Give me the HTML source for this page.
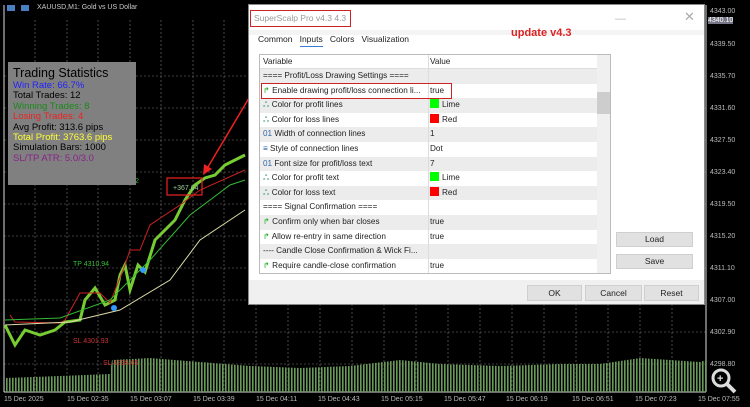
<!DOCTYPE html>
<html><head><meta charset="utf-8"><style>
*{margin:0;padding:0;box-sizing:border-box}
body{width:750px;height:407px;background:#000;position:relative;overflow:hidden;font-family:"Liberation Sans",sans-serif}
.abs{position:absolute}
.stats{left:8px;top:62px;width:128px;height:123px;background:#808080;font-size:9.5px;line-height:10.4px;padding:4px 5px}
.stats .t{font-size:12.5px;color:#000;line-height:15px}
.dlg{left:248px;top:4px;width:457px;height:301px;background:#fff;border:1px solid #888}
.tbl{left:10px;top:49px;width:352px;height:220px;border:1px solid #bbb;background:#fff;font-size:8.2px;color:#222}
.row{position:absolute;left:0;width:337px;height:14.6px;line-height:14.6px}
.row .a{position:absolute;left:3px;white-space:nowrap}
.row .b{position:absolute;left:170px}
.g{background:#ececec}
.btn{position:absolute;background:#e1e1e1;border:1px solid #cfcfcf;font-size:8.5px;text-align:center;color:#222}
.ax{position:absolute;left:710px;font-size:7px;color:#bbb}
.dt{position:absolute;top:396px;font-size:7px;color:#bbb}
.sw{display:inline-block;width:9px;height:9px;vertical-align:-1px;margin-right:3px}
</style></head><body>
<svg class="abs" style="left:0;top:0" width="750" height="407">
<defs><pattern id="vp" width="3" height="10" patternUnits="userSpaceOnUse"><rect width="1.6" height="10" fill="#6a9a5a"/></pattern></defs>
<g stroke="#777" stroke-dasharray="2,2" stroke-width="0.6">
<line x1="4" y1="76" x2="706" y2="76"/><line x1="4" y1="108" x2="706" y2="108"/><line x1="4" y1="140" x2="706" y2="140"/><line x1="4" y1="172" x2="706" y2="172"/><line x1="4" y1="204" x2="706" y2="204"/><line x1="4" y1="236" x2="706" y2="236"/><line x1="4" y1="268" x2="706" y2="268"/><line x1="4" y1="300" x2="706" y2="300"/><line x1="4" y1="332" x2="706" y2="332"/><line x1="4" y1="364" x2="706" y2="364"/>
<line x1="35" y1="20" x2="35" y2="392"/><line x1="67" y1="20" x2="67" y2="392"/><line x1="98" y1="20" x2="98" y2="392"/><line x1="130" y1="20" x2="130" y2="392"/><line x1="161" y1="20" x2="161" y2="392"/><line x1="193" y1="20" x2="193" y2="392"/><line x1="224" y1="20" x2="224" y2="392"/><line x1="256" y1="300" x2="256" y2="392"/><line x1="288" y1="300" x2="288" y2="392"/><line x1="320" y1="300" x2="320" y2="392"/><line x1="352" y1="300" x2="352" y2="392"/><line x1="384" y1="300" x2="384" y2="392"/><line x1="416" y1="300" x2="416" y2="392"/><line x1="448" y1="300" x2="448" y2="392"/><line x1="480" y1="300" x2="480" y2="392"/><line x1="512" y1="300" x2="512" y2="392"/><line x1="544" y1="300" x2="544" y2="392"/><line x1="576" y1="300" x2="576" y2="392"/><line x1="608" y1="300" x2="608" y2="392"/><line x1="640" y1="300" x2="640" y2="392"/><line x1="672" y1="300" x2="672" y2="392"/>
</g>
<line x1="4" y1="5" x2="4" y2="392" stroke="#ddd" stroke-width="1"/>
<line x1="706" y1="5" x2="706" y2="392" stroke="#ddd" stroke-width="1"/>
<line x1="4" y1="392" x2="706" y2="392" stroke="#ddd" stroke-width="1"/>
<polygon fill="url(#vp)" points="5,392 5,378 60,376 110,374 112,360 150,358 200,362 250,366 300,368 350,366 400,360 440,364 500,366 560,364 600,364 640,358 700,362 706,360 706,392"/>
<polyline fill="none" stroke="#7c3" stroke-width="3" points="5,325 15,345 25,330 40,335 55,330 65,322 80,320 85,300 95,288 105,305 115,300 120,275 125,265 130,290 138,265 145,272 155,240 165,230 175,220 185,200 195,185 205,178 215,175 225,165 235,160 245,155"/>
<polyline fill="none" stroke="#c22" stroke-width="1" points="10,315 15,322 60,323 65,320 80,293 100,293 110,303 125,265 130,250 140,250 150,225 180,205 200,190 245,170"/>
<polyline fill="none" stroke="#dda" stroke-width="1" points="5,325 70,322 120,310 170,280 200,240 245,210"/>
<polyline fill="none" stroke="#3b3" stroke-width="1" points="5,320 60,318 110,300 150,260 190,215 230,185 245,180"/>
<rect x="167" y="178" width="35" height="17" fill="none" stroke="#e22" stroke-width="1.2"/>
<line x1="252" y1="93" x2="205" y2="172" stroke="#e22" stroke-width="1.5"/>
<polygon points="203,175 204,164 212,169" fill="#e22"/>
<text x="173" y="190" font-size="7" fill="#9c9" font-family="Liberation Sans">+367.64</text>
<text x="103" y="183" font-size="7" fill="#3b3" font-family="Liberation Sans">TP 4320.62</text>
<text x="73" y="266" font-size="7" fill="#3b3" font-family="Liberation Sans">TP 4310.94</text>
<text x="73" y="343" font-size="7" fill="#c33" font-family="Liberation Sans">SL 4301.93</text>
<text x="103" y="365" font-size="7" fill="#c33" font-family="Liberation Sans">SL 4298.65</text>
<circle cx="143" cy="270" r="3" fill="#39f"/><circle cx="114" cy="308" r="3" fill="#39f"/>
<circle cx="721" cy="378" r="8" fill="none" stroke="#ddd" stroke-width="3"/><line x1="727" y1="384" x2="735" y2="392" stroke="#ddd" stroke-width="4"/>
<text x="717" y="382" font-size="11" fill="#ddd" font-weight="bold">+</text>
</svg>
<div class="abs" style="left:7px;top:5px;width:8px;height:6px;background:#4a7fc1"></div>
<div class="abs" style="left:21px;top:5px;width:8px;height:6px;background:#4a7fc1"></div>
<div class="abs" style="left:37px;top:4px;font-size:7px;color:#ccc">XAUUSD,M1: Gold vs US Dollar</div>
<div class="abs stats">
<div class="t">Trading Statistics</div>
<div style="color:#22f">Win Rate: 66.7%</div>
<div>Total Trades: 12</div>
<div style="color:#1a8a1a">Winning Trades: 8</div>
<div style="color:#e22">Losing Trades: 4</div>
<div>Avg Profit: 313.6 pips</div>
<div style="color:#ff3">Total Profit: 3763.6 pips</div>
<div>Simulation Bars: 1000</div>
<div style="color:#828">SL/TP ATR: 5.0/3.0</div>
</div>
<div class="ax" style="top:8px">4343.00</div>
<div class="ax" style="top:17px;background:#778;color:#fff;left:708px">4340.10</div>
<div class="ax" style="top:41px">4339.50</div>
<div class="ax" style="top:73px">4335.70</div>
<div class="ax" style="top:105px">4331.60</div>
<div class="ax" style="top:137px">4327.50</div>
<div class="ax" style="top:169px">4323.40</div>
<div class="ax" style="top:201px">4319.50</div>
<div class="ax" style="top:233px">4315.20</div>
<div class="ax" style="top:265px">4311.10</div>
<div class="ax" style="top:297px">4307.00</div>
<div class="ax" style="top:329px">4302.90</div>
<div class="ax" style="top:361px">4298.80</div>
<div class="dt" style="left:4px">15 Dec 2025</div><div class="dt" style="left:67px">15 Dec 02:35</div><div class="dt" style="left:130px">15 Dec 03:07</div><div class="dt" style="left:193px">15 Dec 03:39</div><div class="dt" style="left:256px">15 Dec 04:11</div><div class="dt" style="left:318px">15 Dec 04:43</div><div class="dt" style="left:381px">15 Dec 05:15</div><div class="dt" style="left:444px">15 Dec 05:47</div><div class="dt" style="left:506px">15 Dec 06:19</div><div class="dt" style="left:572px">15 Dec 06:51</div><div class="dt" style="left:635px">15 Dec 07:23</div><div class="dt" style="left:698px">15 Dec 07:55</div>

<div class="abs dlg">
<div class="abs" style="left:1px;top:5px;width:101px;height:17px;border:1.5px solid #c22;font-size:8.5px;color:#999;padding:2px 3px;white-space:nowrap;overflow:hidden">SuperScalp Pro v4.3 4.3</div>
<div class="abs" style="left:366px;top:8px;font-size:11px;color:#bbb">—</div>
<div class="abs" style="left:435px;top:4px;font-size:13px;color:#aaa">✕</div>
<div class="abs" style="left:0;top:25px;width:455px;height:5px;background:#f4f4f4"></div>
<div class="abs" style="left:9px;top:29px;font-size:8.5px;color:#222;word-spacing:0">Common&nbsp;&nbsp;&nbsp;<span style="border-bottom:1.5px solid #3a7bd5;padding-bottom:2px">Inputs</span>&nbsp;&nbsp;&nbsp;Colors&nbsp;&nbsp;&nbsp;Visualization</div>
<div class="abs" style="left:262px;top:22px;font-size:11px;font-weight:bold;color:#d22">update v4.3</div>
<div class="abs tbl">
<div class="row" style="top:0;height:14px;border-bottom:1px solid #ddd"><span class="a">Variable</span><span class="b">Value</span></div>
<div class="row g" style="top:14px"><span class="a">==== Profit/Loss Drawing Settings ====</span></div>
<div class="row" style="top:28.6px"><span class="a"><span style="color:#2a2">↱</span> Enable drawing profit/loss connection li...</span><span class="b">true</span></div>
<div class="row g" style="top:43.2px"><span class="a"><span style="color:#396">ஃ</span> Color for profit lines</span><span class="b"><span class="sw" style="background:#0f0"></span>Lime</span></div>
<div class="row" style="top:57.8px"><span class="a"><span style="color:#396">ஃ</span> Color for loss lines</span><span class="b"><span class="sw" style="background:#f00"></span>Red</span></div>
<div class="row g" style="top:72.4px"><span class="a"><span style="color:#36a">01</span> Width of connection lines</span><span class="b">1</span></div>
<div class="row" style="top:87px"><span class="a"><span style="color:#36a">≡</span> Style of connection lines</span><span class="b">Dot</span></div>
<div class="row g" style="top:101.6px"><span class="a"><span style="color:#36a">01</span> Font size for profit/loss text</span><span class="b">7</span></div>
<div class="row" style="top:116.2px"><span class="a"><span style="color:#396">ஃ</span> Color for profit text</span><span class="b"><span class="sw" style="background:#0f0"></span>Lime</span></div>
<div class="row g" style="top:130.8px"><span class="a"><span style="color:#396">ஃ</span> Color for loss text</span><span class="b"><span class="sw" style="background:#f00"></span>Red</span></div>
<div class="row" style="top:145.4px"><span class="a">==== Signal Confirmation ====</span></div>
<div class="row g" style="top:160px"><span class="a"><span style="color:#2a2">↱</span> Confirm only when bar closes</span><span class="b">true</span></div>
<div class="row" style="top:174.6px"><span class="a"><span style="color:#2a2">↱</span> Allow re-entry in same direction</span><span class="b">true</span></div>
<div class="row g" style="top:189.2px"><span class="a">---- Candle Close Confirmation &amp; Wick Fi...</span></div>
<div class="row" style="top:203.8px"><span class="a"><span style="color:#2a2">↱</span> Require candle-close confirmation</span><span class="b">true</span></div>
<div class="abs" style="left:168px;top:0;width:1px;height:218px;background:#ddd"></div>
<div class="abs" style="left:337px;top:0;width:13px;height:218px;background:#f0f0f0"></div>
<div class="abs" style="left:337px;top:37px;width:13px;height:22px;background:#cdcdcd"></div>
<div class="abs" style="left:1px;top:28px;width:191px;height:16px;border:1.5px solid #c22"></div>
</div>
<div class="btn" style="left:367px;top:227px;width:77px;height:15px;line-height:13px">Load</div>
<div class="btn" style="left:367px;top:249px;width:77px;height:15px;line-height:13px">Save</div>
<div class="abs" style="left:0;top:275px;width:455px;height:24px;background:#f0f0f0"></div>
<div class="btn" style="left:278px;top:280px;width:55px;height:16px;line-height:14px">OK</div>
<div class="btn" style="left:336px;top:280px;width:57px;height:16px;line-height:14px">Cancel</div>
<div class="btn" style="left:395px;top:280px;width:55px;height:16px;line-height:14px">Reset</div>
</div>
</body></html>
